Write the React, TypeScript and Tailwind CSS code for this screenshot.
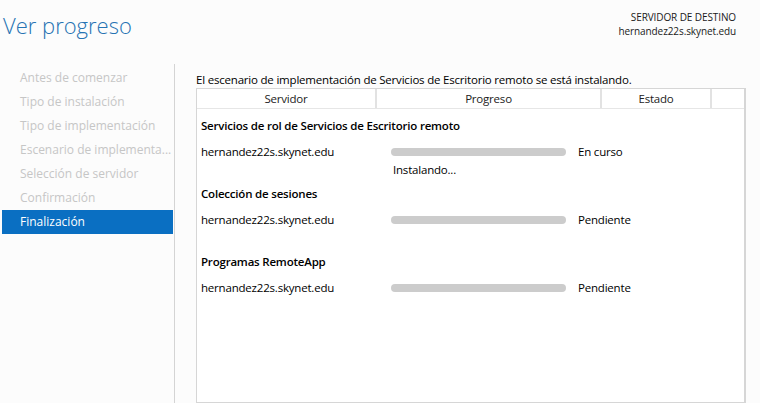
const navItems = [
  "Antes de comenzar",
  "Tipo de instalación",
  "Tipo de implementación",
  "Escenario de implementa...",
  "Selección de servidor",
  "Confirmación",
  "Finalización",
];

const groups = [
  { title: "Servicios de rol de Servicios de Escritorio remoto", status: "En curso", detail: "Instalando..." },
  { title: "Colección de sesiones", status: "Pendiente", detail: "" },
  { title: "Programas RemoteApp", status: "Pendiente", detail: "" },
];

const App = () => {
  return (
    <div
      className="flex h-[403px] w-[760px] flex-col overflow-hidden bg-[#fcfcfc] text-[12px] text-[#1a1a1a]"
      style={{ fontFamily: '"Open Sans", "Noto Sans", sans-serif' }}
    >
      <div className="flex h-[64px] flex-none justify-between">
        <h1 className="pl-[3px] pt-[9px] text-[22px] font-light leading-[32px] text-[#2673b3]">Ver progreso</h1>
        <div className="pr-[24px] pt-[10px] text-right text-[10px] leading-[14px] tracking-[-0.1px] text-[#1a1a1a]">
          <div>SERVIDOR DE DESTINO</div>
          <div>hernandez22s.skynet.edu</div>
        </div>
      </div>

      <div className="flex min-h-0 flex-1">
        <div className="w-[175px] flex-none border-r border-[#d4d4d4] pl-[2px] pr-[1px] pt-[2px]">
          {navItems.map((item, i) => {
            const active = i === navItems.length - 1;
            return (
              <div
                key={item}
                className={`flex h-[24px] items-center pl-[18px] text-[12px] ${
                  active ? "bg-[#0a6fc2] text-white" : "text-[#c6c6c6]"
                }`}
              >
                {item}
              </div>
            );
          })}
        </div>

        <div className="flex min-w-0 flex-1 flex-col pl-[21px] pr-[14px] text-[11.5px] tracking-[-0.2px]">
          <div className="flex h-[24px] items-end text-black">
            El escenario de implementación de Servicios de Escritorio remoto se está instalando.
          </div>
          <div className="flex-1 border border-r-2 border-[#d6d6d6] bg-white">
            <div className="flex h-[20px] border-b border-[#e6e6e6] text-[#222]">
              <div className="flex w-[180px] items-center justify-center border-r-2 border-[#e2e2e2]">Servidor</div>
              <div className="flex w-[225px] items-center justify-center border-r-2 border-[#e2e2e2]">Progreso</div>
              <div className="flex w-[110px] items-center justify-center border-r-2 border-[#e2e2e2]">Estado</div>
              <div className="flex-1" />
            </div>

            {groups.map((g, i) => (
              <div key={g.title} className={i === 0 ? "mt-[8px]" : "mt-[6px]"}>
                <div className="flex h-[18px] items-center pl-[4px] font-semibold text-black">{g.title}</div>
                <div className="mt-[8px] flex h-[18px] items-center text-black">
                  <div className="w-[194px] flex-none pl-[4px]">hernandez22s.skynet.edu</div>
                  <div className="h-[8px] w-[175px] flex-none rounded-[4px] bg-[#cccccc]" />
                  <div className="pl-[12px]">{g.status}</div>
                </div>
                <div className="flex h-[18px] items-center pl-[196px] text-black">{g.detail}</div>
              </div>
            ))}
          </div>
        </div>
      </div>
    </div>
  );
};

export default App;
